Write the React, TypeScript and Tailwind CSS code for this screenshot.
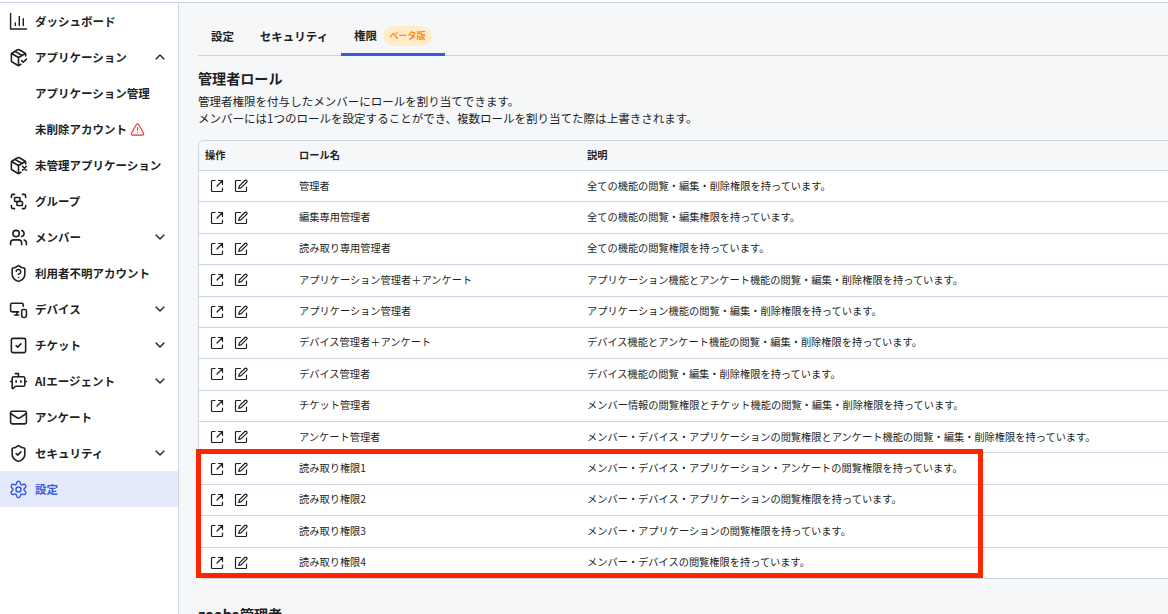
import React from 'react';
import {
  ChevronDown,
  ChevronUp,
  Group,
  Mail,
  MonitorSmartphone,
  PackageCheck,
  PackageX,
  ShieldCheck,
  ShieldQuestionMark,
  SquareCheck,
  BotMessageSquare,
  TriangleAlert,
  Users,
} from 'lucide-react';
import type { LucideIcon } from 'lucide-react';

function ChartIcon({ className }: { className?: string }) {
  return (
    <svg viewBox="0 0 24 24" fill="none" stroke="currentColor" strokeWidth="1.800" strokeLinecap="round" strokeLinejoin="round" className={className}>
      <path d="M2 2v19.500h20M8 17v-3M13 17V5.500M18 17V8.500" />
    </svg>
  );
}

function GearIcon({ className }: { className?: string }) {
  return (
    <svg viewBox="1.5 0.2 21 21" fill="none" stroke="currentColor" strokeWidth="1.600" strokeLinecap="round" strokeLinejoin="round" className={className}>
      <path d="M9.900 3.500c.3-1.300 1-2 2.100-2s1.800.7 2.100 2l.2.900c.2.900 1.100 1.400 2 1.100l.9-.3c1.200-.4 2.200-.1 2.700.8.6 1 .3 2-.6 2.900l-.7.600c-.7.600-.7 1.700 0 2.300l.7.600c.9.900 1.200 1.900.6 2.900-.5.900-1.500 1.200-2.700.8l-.9-.3c-.9-.3-1.800.2-2 1.100l-.2.900c-.3 1.300-1 2-2.100 2s-1.800-.7-2.100-2l-.2-.9c-.2-.9-1.100-1.400-2-1.100l-.9.300c-1.200.4-2.200.1-2.700-.8-.6-1-.3-2 .6-2.900l.7-.6c.7-.6.7-1.700 0-2.300l-.7-.6c-.9-.9-1.200-1.900-.6-2.900.5-.9 1.500-1.200 2.700-.8l.9.300c.9.300 1.800-.2 2-1.100z" />
      <circle cx="12" cy="10.700" r="2.800" />
    </svg>
  );
}

function OpenIcon() {
  return (
    <svg viewBox="0 0 14 14" fill="none" stroke="currentColor" strokeWidth="1.200" strokeLinecap="round" strokeLinejoin="round" className="size-3.5">
      <path d="M5 1.500H2.500A1 1 0 0 0 1.500 2.500v9A1 1 0 0 0 2.500 12.500h9A1 1 0 0 0 12.500 11.500V9M8.500 1.500h4v4M12.500 1.500 7 7" />
    </svg>
  );
}

function EditIcon() {
  return (
    <svg viewBox="0 0 14 14" fill="none" stroke="currentColor" strokeWidth="1.200" strokeLinecap="round" strokeLinejoin="round" className="size-3.5">
      <path d="M6.500 1.500h-4A1 1 0 0 0 1.500 2.500v9A1 1 0 0 0 2.500 12.500h9A1 1 0 0 0 12.500 11.500V8" />
      <path d="m10.800 1.500a1.200 1.200 0 0 1 1.800 1.800L7.200 8.700 4.700 9.400 5.400 6.900Z" />
    </svg>
  );
}

type NavItem = {
  label: string;
  icon?: LucideIcon | React.ComponentType<{ className?: string }>;
  chevron?: 'up' | 'down';
  warning?: boolean;
  active?: boolean;
};

const navItems: NavItem[] = [
  { label: 'ダッシュボード', icon: ChartIcon },
  { label: 'アプリケーション', icon: PackageCheck, chevron: 'up' },
  { label: 'アプリケーション管理' },
  { label: '未削除アカウント', warning: true },
  { label: '未管理アプリケーション', icon: PackageX },
  { label: 'グループ', icon: Group },
  { label: 'メンバー', icon: Users, chevron: 'down' },
  { label: '利用者不明アカウント', icon: ShieldQuestionMark },
  { label: 'デバイス', icon: MonitorSmartphone, chevron: 'down' },
  { label: 'チケット', icon: SquareCheck, chevron: 'down' },
  { label: 'AIエージェント', icon: BotMessageSquare, chevron: 'down' },
  { label: 'アンケート', icon: Mail },
  { label: 'セキュリティ', icon: ShieldCheck, chevron: 'down' },
  { label: '設定', icon: GearIcon, active: true },
];

const roles: [string, string][] = [
  ['管理者', '全ての機能の閲覧・編集・削除権限を持っています。'],
  ['編集専用管理者', '全ての機能の閲覧・編集権限を持っています。'],
  ['読み取り専用管理者', '全ての機能の閲覧権限を持っています。'],
  ['アプリケーション管理者＋アンケート', 'アプリケーション機能とアンケート機能の閲覧・編集・削除権限を持っています。'],
  ['アプリケーション管理者', 'アプリケーション機能の閲覧・編集・削除権限を持っています。'],
  ['デバイス管理者＋アンケート', 'デバイス機能とアンケート機能の閲覧・編集・削除権限を持っています。'],
  ['デバイス管理者', 'デバイス機能の閲覧・編集・削除権限を持っています。'],
  ['チケット管理者', 'メンバー情報の閲覧権限とチケット機能の閲覧・編集・削除権限を持っています。'],
  ['アンケート管理者', 'メンバー・デバイス・アプリケーションの閲覧権限とアンケート機能の閲覧・編集・削除権限を持っています。'],
  ['読み取り権限1', 'メンバー・デバイス・アプリケーション・アンケートの閲覧権限を持っています。'],
  ['読み取り権限2', 'メンバー・デバイス・アプリケーションの閲覧権限を持っています。'],
  ['読み取り権限3', 'メンバー・アプリケーションの閲覧権限を持っています。'],
  ['読み取り権限4', 'メンバー・デバイスの閲覧権限を持っています。'],
];

function NavRow({ item }: { item: NavItem }) {
  const Icon = item.icon;
  return (
    <a className={`flex h-9 shrink-0 items-center pr-[10px] pl-[9px] ${item.active ? 'bg-[#e4e9fc] text-[#365bdc]' : ''}`}>
      <span className="mr-[7px] flex w-[19px] justify-center">{Icon && <Icon className="size-[19px]" />}</span>
      <span className="pt-[2px] text-[11.500px] font-bold whitespace-nowrap">{item.label}</span>
      {item.warning && <TriangleAlert className="ml-[3px] size-[15px] text-[#ff2a2a]" strokeWidth={1.8} />}
      {item.chevron === 'up' && <ChevronUp className="ml-auto size-4" />}
      {item.chevron === 'down' && <ChevronDown className="ml-auto size-4" />}
    </a>
  );
}

export default function App() {
  return (
    <div className="flex h-[614px] w-[1168px] flex-col overflow-hidden bg-[#f6f7f9] font-['Noto_Sans_CJK_JP',sans-serif] text-[#1d1f24]">
      <div className="h-[3px] shrink-0 border-b border-[#cdd5e4] bg-white" />
      <div className="flex min-h-0 flex-1">
        <nav className="flex w-[179px] shrink-0 flex-col border-r border-[#cdd5e4] bg-white">
          {navItems.map((item) => (
            <NavRow key={item.label} item={item} />
          ))}
        </nav>
        <main className="relative ml-[19px] min-w-0 flex-1">
          <div className="flex h-[53px] items-end border-b border-[#cdd3e2] text-[11.500px] font-bold">
            <div className="flex h-[37px] w-[49px] items-center justify-center">設定</div>
            <div className="flex h-[37px] w-[94px] items-center justify-center">セキュリティ</div>
            <div className="-mb-px flex h-[38px] w-[104px] items-center border-b-[3px] border-[#365bdc] pt-px pl-[13px]">
              権限
              <span className="ml-[6px] flex h-5 w-[49px] items-center justify-center rounded-full bg-[#ffecc9] text-[9px] text-[#fb8c1e]">ベータ版</span>
            </div>
          </div>
          <h1 className="mt-[12px] text-[14.100px] leading-[21px] font-bold">管理者ロール</h1>
          <p className="mt-[4px] text-[11.520px] leading-[17px]">
            管理者権限を付与したメンバーにロールを割り当てできます。
            <br />
            メンバーには1つのロールを設定することができ、複数ロールを割り当てた際は上書きされます。
          </p>
          <div className="mt-[13px] w-[1200px] rounded-md border border-[#cdd3e2] bg-white text-[10.220px]">
            <div className="flex h-[29px] items-center rounded-t-md bg-[#f6f7f9] pb-[2px] font-bold">
              <span className="w-[100px] pl-[6px]">操作</span>
              <span className="w-[288px]">ロール名</span>
              <span>説明</span>
            </div>
            {roles.map(([name, description]) => (
              <div key={name} className="flex h-[31.380px] items-center border-t border-[#cdd3e2]">
                <span className="flex w-[100px] gap-[10px] pl-[11px]">
                  <OpenIcon />
                  <EditIcon />
                </span>
                <span className="w-[288px] pb-[2px]">{name}</span>
                <span className="pb-[2px] whitespace-nowrap">{description}</span>
              </div>
            ))}
          </div>
          <h2 className="mt-[25px] text-[14.100px] leading-[21px] font-bold">zooba管理者</h2>
          <div className="absolute top-[446px] -left-[2px] h-[129px] w-[787px] border-[5px] border-[#ff2500]" />
        </main>
      </div>
    </div>
  );
}
